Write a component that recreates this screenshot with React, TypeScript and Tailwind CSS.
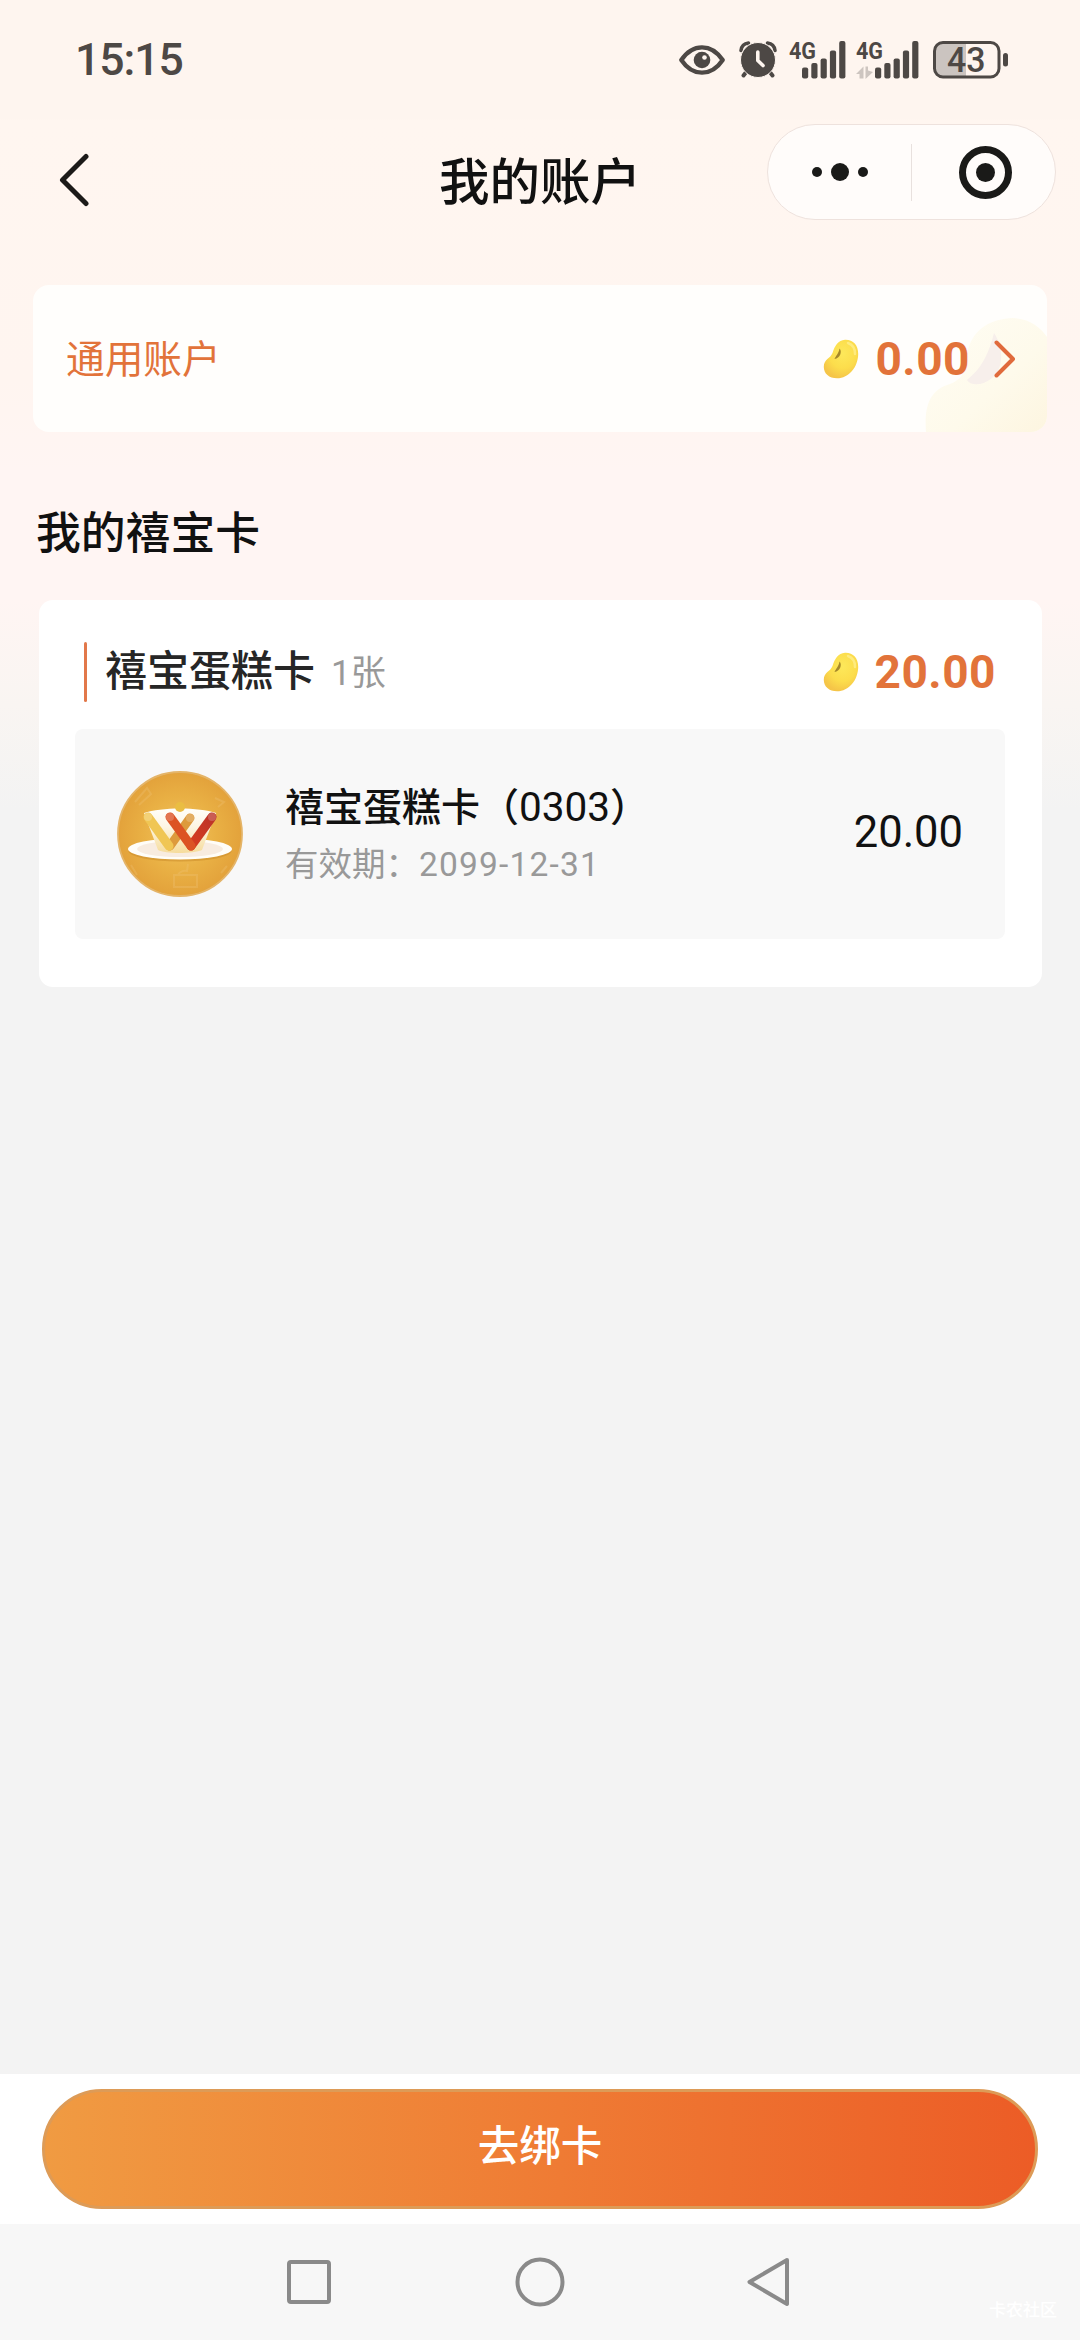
// App.tsx – "我的账户" page of the mini program
import { useId } from "react";

const coupons = [{ name: "禧宝蛋糕卡", code: "0303", expires: "2099-12-31", amount: "20.00" }];

function EyeIcon() {
  return (
    <svg width="46" height="30" viewBox="0 0 46 30" aria-hidden="true">
      <path d="M2.3 15C8 6.500 15 2.300 23 2.300S38 6.500 43.700 15C38 23.500 31 27.700 23 27.700S8 23.500 2.300 15Z" fill="none" stroke="#4d4845" strokeWidth="4.300" strokeLinejoin="round" />
      <circle cx="23" cy="15" r="8.300" fill="#4d4845" />
      <circle cx="25.500" cy="12.500" r="2.300" fill="#fef5ef" />
    </svg>
  );
}

function AlarmIcon() {
  return (
    <svg width="38" height="37" viewBox="0 0 38 37" aria-hidden="true">
      <g fill="none" stroke="#4d4845" strokeLinecap="round">
        <path d="M2 9.500C2.500 5.500 5 2.500 9.500 2M28.500 2C33 2.500 35.500 5.500 36 9.500" strokeWidth="3.500" />
        <path d="M8 30L4.500 34.500M30 30L33.500 34.500" strokeWidth="4" />
      </g>
      <circle cx="19" cy="19" r="17.500" fill="#4d4845" stroke="#fef5ef" strokeWidth="1" />
      <path d="M18.800 11V19.500L24 24.500" fill="none" stroke="#fef5ef" strokeWidth="3.600" strokeLinecap="round" strokeLinejoin="round" />
    </svg>
  );
}

function SignalIcon({ data = false }: { data?: boolean }) {
  // the second SIM also shows data arrows and sits tighter to its bars
  const start = data ? 19 : 13;
  return (
    <svg className="-mt-2" width={data ? 63 : 57} height="46" viewBox={data ? "0 -8 63 46" : "0 -8 57 46"} aria-hidden="true">
      <text x="0" y="18" fontFamily="Roboto, sans-serif" fontWeight="700" fontSize="24.500" textLength="27" lengthAdjust="spacingAndGlyphs" fill="#4d4845">4G</text>
      {[26.5, 22, 17.5, 9.5, 0].map((top, i) => (
        <rect key={top} x={start + i * 9.300} y={top} width="6.200" height={37.5 - top} rx="2" fill="#4d4845" />
      ))}
      {data && (
        <path d="M0 33L7.500 25.500V37.500H3.500V33ZM9.500 25.500H12V29.500L17 31L9.500 38Z" fill="#cdc5c0" />
      )}
    </svg>
  );
}

function BatteryIcon() {
  return (
    <svg width="76" height="38" viewBox="0 0 76 38" aria-hidden="true">
      <path d="M10 1.500H33V36H10Q2 36 2 28V9.500Q2 1.500 10 1.500Z" fill="#cbc4c0" />
      <rect x="1.500" y="1.500" width="64.500" height="34.500" rx="8.500" fill="none" stroke="#4d4845" strokeWidth="3" />
      <rect x="70" y="12" width="5" height="13.500" rx="2.500" fill="#4d4845" />
      <text x="14" y="31" fontFamily="Roboto, sans-serif" fontWeight="500" fontSize="34.500" textLength="38.500" lengthAdjust="spacingAndGlyphs" fill="#4d4845">43</text>
    </svg>
  );
}

function Bean() {
  const id = useId();
  return (
    <svg width="36" height="40" viewBox="0 0 36 40" aria-hidden="true">
      <defs>
        <radialGradient id={id} cx="0.550" cy="0.350" r="0.650">
          <stop offset="0" stopColor="#fde85a" />
          <stop offset="0.600" stopColor="#fcdd4c" />
          <stop offset="1" stopColor="#f5c548" />
        </radialGradient>
      </defs>
      <path d="M22 .8C30 .5 35.200 6 35.200 15C35 28 26 39.300 14 39.300C6 39.300 .8 34.500 .8 28C.8 20 7.500 19.500 9.500 14C12 6.500 15 1.500 22 .8Z" fill={`url(#${id})`} />
      <path d="M25 4C29.500 5.500 32 9.500 32 15" fill="none" stroke="#fff3a0" strokeWidth="2.500" strokeLinecap="round" opacity="0.600" />
      <path d="M16.500 9.500C19.500 12.500 17 19.500 11.500 20C13 16.500 15.500 15 16.500 9.500Z" fill="#8f701f" opacity="0.800" />
    </svg>
  );
}

function BeanWatermark() {
  return (
    <svg className="absolute right-0 bottom-0" width="122" height="114" viewBox="0 0 122 114" aria-hidden="true">
      <defs>
        <linearGradient id="ghost" x1="0" y1="0" x2="1" y2="1">
          <stop offset="0" stopColor="#fffdf4" />
          <stop offset="0.600" stopColor="#fefaeb" />
          <stop offset="1" stopColor="#fdf5e0" />
        </linearGradient>
      </defs>
      <path d="M1 114C-1 88 5 73 22 67C44 60 38 48 43 32C49 10 66 1 88 0C105 1 115 9 122 19V114Z" fill="url(#ghost)" />
      <path d="M69 15C64 35 57 50 42 62C45 68 58 68 67 60C80 50 78 28 69 15Z" fill="#f7efeb" />
    </svg>
  );
}

function CardLogo() {
  return (
    <svg className="shrink-0" width="126" height="126" viewBox="0 0 126 126" aria-hidden="true">
      <defs>
        <radialGradient id="disc" cx="0.500" cy="0.500" r="0.500">
          <stop offset="0" stopColor="#f2c45d" />
          <stop offset="0.600" stopColor="#e9b044" />
          <stop offset="1" stopColor="#e3a23b" />
        </radialGradient>
        <linearGradient id="cup" x1="0" y1="0" x2="0" y2="1">
          <stop offset="0" stopColor="#fffefa" />
          <stop offset="0.400" stopColor="#fdf6e4" />
          <stop offset="1" stopColor="#f6dc9c" />
        </linearGradient>
        <linearGradient id="red" x1="1" y1="0" x2="0" y2="1">
          <stop offset="0" stopColor="#bd3429" />
          <stop offset="1" stopColor="#d63d1f" />
        </linearGradient>
      </defs>
      <circle cx="63" cy="63" r="62" fill="url(#disc)" stroke="#e4b468" strokeWidth="1.800" />
      <g fill="none" stroke="#f0c477" strokeWidth="2" opacity="0.300">
        <path d="M18 31L30 17L34 23L22 34M98 27L107 31L101 36M14 94L20 104M110 95L104 102" />
        <path d="M57 104H80V116H57ZM61 104Q64 99 70 100L71 93" />
      </g>
      <ellipse cx="63" cy="80" rx="51.500" ry="10.500" fill="#c98a28" opacity="0.500" />
      <ellipse cx="63" cy="78" rx="52" ry="10.500" fill="#fffdf8" />
      <ellipse cx="63" cy="78" rx="43" ry="8" fill="#f8ece0" />
      <path d="M27 42C44 36 82 36 99 42L85 79C76 83 48 83 41 79Z" fill="url(#cup)" />
      <circle cx="63" cy="36" r="5" fill="#eabd42" />
      <g fill="none" strokeLinecap="round" strokeWidth="9">
        <path d="M73 47L53 75" stroke="#dd9a3c" />
        <path d="M31 46L52 75" stroke="#f0c654" />
        <path d="M95 46L74 75" stroke="url(#red)" />
        <path d="M53 46L74 75" stroke="#dc5324" />
      </g>
      <g fill="#fff" opacity="0.200">
        <circle cx="31" cy="46" r="4" />
        <circle cx="53" cy="46" r="4" />
        <circle cx="73" cy="47" r="4" />
        <circle cx="95" cy="46" r="4" />
      </g>
    </svg>
  );
}

export default function App() {
  return (
    <div className="relative flex h-[2340px] w-[1080px] flex-col overflow-hidden bg-[#f3f3f3] bg-[linear-gradient(180deg,#fef5ef_0px,#fef5ef_119px,#fff6f0_120px,#fff5f0_380px,#fff5f3_470px,#fff5f3_600px,#f9f5f2_705px,#f3f3f3_810px)] font-['Roboto','Noto_Sans_CJK_SC',sans-serif] text-[#111]">
      {/* Status bar */}
      <div className="flex h-[119px] shrink-0 justify-between pt-[41px] pr-[71px] pl-[75px]">
        <span className="h-10 text-[44.500px] leading-[39px] font-medium tracking-[-1px] text-[#4d4845]">15:15</span>
        <div className="flex h-[38px] items-start">
          <div className="mt-1 mr-[14px]"><EyeIcon /></div>
          <div className="mr-3"><AlarmIcon /></div>
          <div className="mr-[10px]"><SignalIcon /></div>
          <div className="mr-[14px]"><SignalIcon data /></div>
          <BatteryIcon />
        </div>
      </div>

      {/* Nav header */}
      <header className="grid h-[166px] shrink-0 grid-cols-[440px_200px_1fr] items-start">
        <svg className="mt-[34px] ml-[58px]" width="32" height="54" viewBox="0 0 32 54" aria-hidden="true">
          <path d="M28 3.500L4.500 27L28 50.500" fill="none" stroke="#1c1a18" strokeWidth="5" strokeLinecap="round" strokeLinejoin="round" />
        </svg>
        <h1 className="mt-7 ml-[-1px] text-[50.500px] leading-[72px] font-medium whitespace-nowrap">我的账户</h1>
        <div className="mt-[5px] mr-6 ml-auto flex h-24 w-[289px] items-center rounded-full border border-[#eee2dd] bg-[#fffcfa]">
          <div className="flex w-[143px] items-center justify-center gap-[9px]">
            <span className="size-[10px] rounded-full bg-[#1a1a18]" />
            <span className="size-[18px] rounded-full bg-[#1a1a18]" />
            <span className="size-[10px] rounded-full bg-[#1a1a18]" />
          </div>
          <span className="h-[57px] w-px bg-[#e8e1de]" />
          <div className="flex flex-1 justify-center">
            <div className="ml-1 flex size-[53px] items-center justify-center rounded-full border-[7px] border-[#1a1a18]">
              <span className="size-[19px] rounded-full bg-[#1a1a18]" />
            </div>
          </div>
        </div>
      </header>

      {/* General account */}
      <section className="relative mr-[33px] ml-[33px] flex h-[147px] shrink-0 items-center overflow-hidden rounded-2xl bg-[#fffefc] pr-[31px] pl-[33px] text-[#e2733a]">
        <BeanWatermark />
        <span className="relative pt-[3px] text-[38.700px] leading-[56px]">通用账户</span>
        <div className="relative ml-auto flex items-center">
          <Bean />
          <span className="ml-4 text-[46px] leading-[54px] font-bold tracking-[0.500px]">0.00</span>
          <svg className="ml-6" width="22" height="38" viewBox="0 0 22 38" aria-hidden="true">
            <path d="M2.500 2.500L19 19L2.500 35.500" fill="none" stroke="#e06a3c" strokeWidth="4" strokeLinecap="round" strokeLinejoin="round" />
          </svg>
        </div>
      </section>

      <h2 className="mt-[70px] ml-9 h-[98px] shrink-0 text-[44.800px] leading-[64px] font-medium">我的禧宝卡</h2>

      {/* Gift cards */}
      <section className="mr-[38px] ml-[39px] h-[387px] shrink-0 rounded-[14px] bg-white pt-[42px] pr-[37px] pl-9">
        <div className="flex h-[60px] items-center pr-[9px] pl-[9px]">
          <span className="h-[60px] w-[3px] rounded-full bg-[#e2784a]" />
          <span className="ml-[18px] text-[42px] leading-[60px] font-medium text-[#262626]">禧宝蛋糕卡</span>
          <span className="ml-4 pt-1 text-[35px] leading-[60px] text-[#999]">1张</span>
          <div className="ml-auto flex items-center">
            <Bean />
            <span className="ml-4 text-[46px] leading-[54px] font-bold tracking-[0.500px] text-[#e2733a]">20.00</span>
          </div>
        </div>
        {coupons.map((c) => (
          <div key={c.code} className="mt-[27px] flex h-[210px] items-center rounded-lg bg-[#f8f8f8] pr-[42px] pl-[42px]">
            <CardLogo />
            <div className="ml-[42px] pt-[5px]">
              <p className="text-[39px] leading-[56px] font-medium whitespace-nowrap">
                {c.name}（<span className="text-[40.500px] font-normal">{c.code}</span>）
              </p>
              <p className="text-[33.500px] leading-[58px] whitespace-nowrap text-[#999]">
                有效期：<span className="tracking-[1.200px]">{c.expires}</span>
              </p>
            </div>
            <span className="ml-auto pb-[2px] text-[43.500px] leading-[52px]">{c.amount}</span>
          </div>
        ))}
      </section>

      {/* Bind card */}
      <div className="mt-auto h-[150px] shrink-0 bg-white px-[42px] pt-[15px]">
        <button className="h-[120px] w-full rounded-full border-[3px] border-[#dd9b57] bg-[linear-gradient(90deg,#f09b42,#ef7b34_52%,#ec5c26)] bg-origin-border pb-[3px] text-[41.500px] font-medium text-white">
          去绑卡
        </button>
      </div>

      {/* System navigation */}
      <nav className="relative flex h-[116px] shrink-0 items-center bg-[#f7f7f7] pl-[286px]">
        <svg width="46" height="50" viewBox="0 0 46 50" fill="none" stroke="#8a8a8a" strokeWidth="4" aria-hidden="true">
          <rect x="3" y="5" width="40" height="40" rx="2" />
        </svg>
        <svg className="ml-[183px]" width="50" height="50" viewBox="0 0 50 50" fill="none" stroke="#8a8a8a" strokeWidth="4" aria-hidden="true">
          <circle cx="25" cy="25" r="22.500" />
        </svg>
        <svg className="ml-[181px]" width="46" height="50" viewBox="0 0 46 50" fill="none" stroke="#8a8a8a" strokeWidth="4" strokeLinejoin="round" aria-hidden="true">
          <path d="M41 3L3.500 25L41 47Z" />
        </svg>
        <span className="absolute right-[23px] bottom-[18px] text-[17px] leading-6 font-medium text-white">卡农社区</span>
      </nav>
    </div>
  );
}
